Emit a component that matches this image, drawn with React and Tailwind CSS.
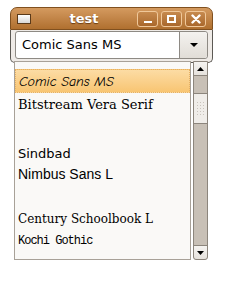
import React from "react";

function Btn({ children }) {
  return (
    <div className="w-[21px] h-[16px] rounded-[3px] border border-[#f0c89a] bg-gradient-to-b from-[#c68a4e] to-[#a9682c] flex items-center justify-center">
      {children}
    </div>
  );
}

export default function App() {
  const rows = [
    { t: "Comic Sans MS", h: 24, f: "'Comic Sans MS','Comic Neue',cursive", cls: "text-[14px] italic", sel: true },
    { t: "Bitstream Vera Serif", h: 23, f: "'DejaVu Serif',serif", cls: "text-[13px]" },
    { t: "", h: 27 },
    { t: "Sindbad", h: 21, f: "'DejaVu Sans',sans-serif", cls: "text-[13px]" },
    { t: "Nimbus Sans L", h: 21, f: "'Liberation Sans',sans-serif", cls: "text-[14px]" },
    { t: "", h: 22 },
    { t: "Century Schoolbook L", h: 23, f: "'DejaVu Serif',serif", cls: "text-[12px]" },
    { t: "Kochi Gothic", h: 22, f: "'Liberation Mono',monospace", cls: "text-[12px] tracking-[-1px]" },
  ];
  return (
    <div className="relative w-[240px] h-[285px] bg-white" style={{ fontFamily: "'DejaVu Sans',sans-serif" }}>
      <div className="pt-[7px] pl-[10px]">
        <div className="w-[203px]">
          <div className="h-[23px] rounded-t-[7px] border border-[#80501f] bg-gradient-to-b from-[#d49a5f] to-[#b0702f] flex items-center pl-[6px] pr-[6px]">
            <div className="w-[14px] h-[10px] border border-[#5a3a1a] bg-gradient-to-b from-[#ffffff] to-[#d8d8d8]" />
            <div className="flex-1 text-center text-white text-[13px] font-bold leading-none [text-shadow:0_1px_1px_#6b3d12]">test</div>
            <div className="flex gap-[3px]">
              <Btn><div className="w-[8px] h-[2px] bg-white mt-[6px]" /></Btn>
              <Btn><div className="w-[9px] h-[8px] border-2 border-white" /></Btn>
              <Btn>
                <svg width="10" height="10" viewBox="0 0 10 10"><path d="M1.5 1.5L8.5 8.5M8.5 1.5L1.5 8.5" stroke="white" strokeWidth="2.4" strokeLinecap="round" /></svg>
              </Btn>
            </div>
          </div>
          <div className="h-[33px] bg-[#efebe7] border-x border-b border-[#5c5954] rounded-b-[5px] pl-[4px] pr-[4px] pt-[1px]">
            <div className="h-[28px] flex rounded-[3px] border border-[#8e8a84] bg-white">
              <div className="flex-1 flex items-center pl-[6px] text-[13px] text-black">Comic Sans MS</div>
              <div className="w-[28px] border-l border-[#8e8a84] rounded-r-[3px] bg-gradient-to-b from-[#f4f2ef] to-[#e1ddd7] flex items-center justify-center">
                <svg width="8" height="5" viewBox="0 0 8 5"><path d="M0 0H8L4 4Z" fill="#000" /></svg>
              </div>
            </div>
          </div>
        </div>
      </div>

      <div className="absolute left-[14px] top-[61px] flex gap-[2px]">
        <div className="w-[177px] h-[199px] bg-[#faf9f7] border border-[#a8a198] pt-[7px] overflow-hidden">
          {rows.map((r, i) => (
            <div
              key={i}
              className={`flex items-center pl-[3px] whitespace-nowrap text-black ${r.cls || ""} ${r.sel ? "bg-gradient-to-b from-[#fcdca4] to-[#f8c572] border border-dotted border-[#e5b064]" : ""}`}
              style={{ height: r.h, fontFamily: r.f }}
            >
              {r.t}
            </div>
          ))}
        </div>
        <div className="w-[15px] h-[199px] flex flex-col border border-[#8c857c] rounded-b-[3px] bg-[#c8c0b6]">
          <div className="h-[14px] bg-gradient-to-b from-[#f5f3f0] to-[#e6e2dd] border-b border-[#8c857c] flex items-center justify-center">
            <svg width="7" height="4" viewBox="0 0 7 4"><path d="M0 4H7L3.5 0Z" fill="#000" /></svg>
          </div>
          <div className="h-[17px]" />
          <div className="h-[31px] bg-[#f0ede9] border-y border-[#8c857c] flex items-center justify-center">
            <div className="grid grid-cols-3 gap-[2px]">
              {Array.from({ length: 15 }).map((_, i) => (
                <div key={i} className="w-[1px] h-[1px] bg-[#c9c3bc]" />
              ))}
            </div>
          </div>
          <div className="flex-1" />
          <div className="h-[14px] bg-gradient-to-b from-[#f5f3f0] to-[#e6e2dd] border-t border-[#8c857c] rounded-b-[3px] flex items-center justify-center">
            <svg width="7" height="4" viewBox="0 0 7 4"><path d="M0 0H7L3.5 4Z" fill="#000" /></svg>
          </div>
        </div>
      </div>
    </div>
  );
}
